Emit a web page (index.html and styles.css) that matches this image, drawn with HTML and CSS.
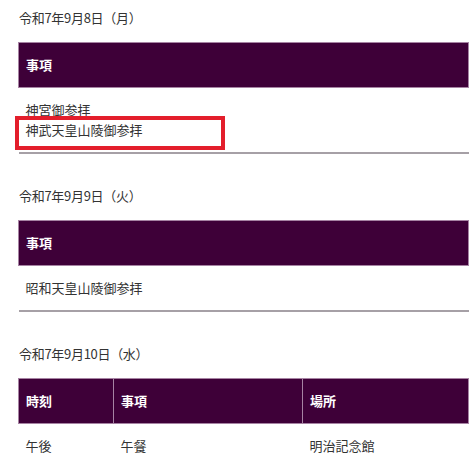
FILE: index.html
```html
<!DOCTYPE html>
<html lang="ja">
<head>
  <meta charset="UTF-8">
  <title>御日程</title>
  <link rel="stylesheet" href="styles.css">
</head>
<body>
  <div class="schedule">
    <section class="day">
      <p class="day-date">令和7年9月8日（月）</p>
      <table class="day-table">
        <thead>
          <tr><th>事項</th></tr>
        </thead>
        <tbody>
          <tr>
            <td>
              神宮御参拝<br>
              <span class="mark">神武天皇山陵御参拝</span>
            </td>
          </tr>
        </tbody>
      </table>
    </section>

    <section class="day">
      <p class="day-date">令和7年9月9日（火）</p>
      <table class="day-table">
        <thead>
          <tr><th>事項</th></tr>
        </thead>
        <tbody>
          <tr><td>昭和天皇山陵御参拝</td></tr>
        </tbody>
      </table>
    </section>

    <section class="day">
      <p class="day-date">令和7年9月10日（水）</p>
      <table class="day-table">
        <colgroup>
          <col class="col-time">
          <col class="col-item">
          <col>
        </colgroup>
        <thead>
          <tr><th>時刻</th><th>事項</th><th>場所</th></tr>
        </thead>
        <tbody>
          <tr><td>午後</td><td>午餐</td><td>明治記念館</td></tr>
        </tbody>
      </table>
    </section>
  </div>
</body>
</html>
```

FILE: styles.css
```css
body {
  margin: 0;
  background: #fff;
  color: #333;
  font-family: "Noto Sans CJK JP", "Noto Sans", sans-serif;
  font-size: 13px;
  line-height: 20px;
}
.schedule {
  width: 451px;
  padding: 8px 0 0 18px;
}
.day {
  margin-bottom: 32px;
}
.day-date {
  margin: 0 0 14px 1px;
  font-size: 13px;
  letter-spacing: -0.3px;
}
.day-table {
  width: 100%;
  border-collapse: collapse;
  table-layout: fixed;
}
.col-time { width: 95px; }
.col-item { width: 189px; }
.day-table th {
  background: #3e0038;
  color: #fff;
  font-weight: bold;
  text-align: left;
  padding: 12px 7px;
  border: 1px solid #a683a3;
}
.day-table td {
  padding: 12px 7px;
  text-align: left;
  vertical-align: top;
  border-bottom: 2px solid #a6a0a6;
}
.mark {
  position: relative;
}
.mark::after {
  content: "";
  position: absolute;
  left: -11px;
  top: -4px;
  width: 202px;
  height: 26px;
  border: 4px solid #e31e2b;
}
```
